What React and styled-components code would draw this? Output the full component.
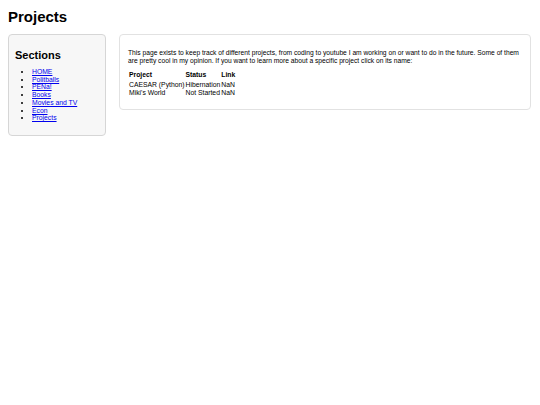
import styled, { createGlobalStyle } from 'styled-components';

const Global = createGlobalStyle`
  body {
    margin: 8px;
    font-family: "Liberation Sans", Arial, sans-serif;
    background: #fff;
    color: #000;
  }
`;

const Title = styled.h1`
  font-size: 15px;
  margin: 0 0 9px;
  line-height: 17px;
`;

const Layout = styled.div`
  display: flex;
  align-items: flex-start;
  gap: 13px;
`;

const Sidebar = styled.nav`
  width: 98px;
  box-sizing: border-box;
  background: #f7f7f7;
  border: 1px solid #d6d6d6;
  border-radius: 4px;
  padding: 14px 6px 13px;
`;

const SideTitle = styled.h2`
  font-size: 11px;
  margin: 0 0 6px;
  line-height: 13px;
`;

const List = styled.ul`
  margin: 0;
  padding-left: 17px;
  font-size: 6.8px;
  line-height: 7.7px;
`;

const Link = styled.a`
  color: #0000ee;
`;

const Main = styled.main`
  flex: 1;
  box-sizing: border-box;
  border: 1px solid #e2e2e2;
  border-radius: 4px;
  padding: 14px 8px 12px;
  font-size: 6.7px;
  line-height: 7.5px;
  margin-right: 1px;
`;

const Text = styled.p`
  margin: 0 0 7px;
`;

const Table = styled.table`
  border-collapse: collapse;
  font-size: 6.8px;
  line-height: 7.5px;
  margin-left: 1px;

  th {
    text-align: left;
    font-weight: bold;
    padding: 0 5px 1px 0;
  }
  td {
    padding: 1px 1px 0 0;
  }
`;

const sections = ['HOME', 'Politballs', 'PENa!', 'Books', 'Movies and TV', 'Econ', 'Projects'];

export default function App() {
  return (
    <>
      <Global />
      <Title>Projects</Title>
      <Layout>
        <Sidebar>
          <SideTitle>Sections</SideTitle>
          <List>
            {sections.map((s) => (
              <li key={s}><Link href="#">{s}</Link></li>
            ))}
          </List>
        </Sidebar>
        <Main>
          <Text>
            This page exists to keep track of different projects, from coding to youtube I am working on or want to do in the future. Some of them are pretty cool in my opinion. If you want to learn more about a specific project click on its name:
          </Text>
          <Table>
            <thead>
              <tr><th>Project</th><th>Status</th><th>Link</th></tr>
            </thead>
            <tbody>
              <tr><td>CAESAR (Python)</td><td>Hibernation</td><td>NaN</td></tr>
              <tr><td>Miki's World</td><td>Not Started</td><td>NaN</td></tr>
            </tbody>
          </Table>
        </Main>
      </Layout>
    </>
  );
}
